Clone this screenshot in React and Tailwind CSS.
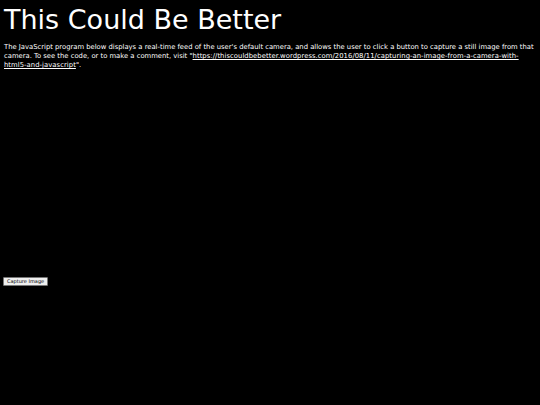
import React from "react";

export default function App() {
  return (
    <div className="min-h-[405px] bg-black text-white px-[4px] font-['DejaVu_Sans',sans-serif]">
      <h1 className="text-[27px] leading-[29px] pt-[5px] pb-[9px]">This Could Be Better</h1>
      <p className="text-[6.8px] leading-[9px]">
        The JavaScript program below displays a real-time feed of the user's default camera, and allows the user to click a button to capture a still image from that camera. To see the code, or to make a comment, visit "
        <a className="underline tracking-[0.06px]" href="#">https://thiscouldbebetter.wordpress.com/2016/08/11/capturing-an-image-from-a-camera-with-html5-and-javascript</a>
        ".
      </p>
      <div className="h-[207px]" />
      <button className="block h-[9px] ml-[-1px] bg-[#efefef] text-black border border-[#767676] rounded-[1px] text-[5px] leading-[7px] px-[3px] py-0">
        Capture Image
      </button>
    </div>
  );
}
